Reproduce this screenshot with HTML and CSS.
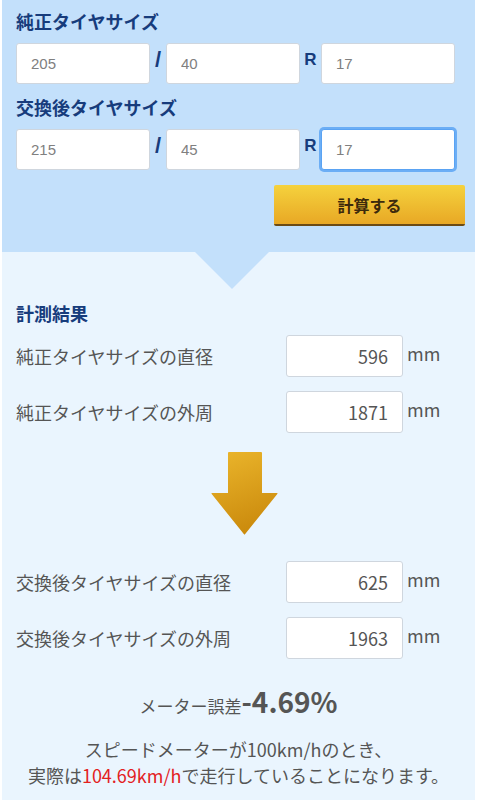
FILE: index.html
```html
<!DOCTYPE html>
<html lang="ja">
  <head>
    <meta charset="UTF-8" />
    <title>タイヤサイズ計算</title>
    <link rel="stylesheet" href="styles.css">
  </head>
  <body>
    <div class="calc">
      <div class="top">
        <h2>純正タイヤサイズ</h2>
        <div class="size-row">
          <input value="205" />
          <span class="sep">/</span>
          <input value="40" />
          <span class="sep r">R</span>
          <input value="17" />
        </div>

        <h2 class="second">交換後タイヤサイズ</h2>
        <div class="size-row">
          <input value="215" />
          <span class="sep">/</span>
          <input value="45" />
          <span class="sep r">R</span>
          <input class="focus" value="17" />
        </div>

        <div class="actions">
          <button>計算する</button>
        </div>
      </div>

      <div class="result">
        <h2>計測結果</h2>
        <div class="rows">
          <div class="row">
            <span class="label">純正タイヤサイズの直径</span>
            <div class="value">596</div>
            <span class="unit">mm</span>
          </div>
          <div class="row">
            <span class="label">純正タイヤサイズの外周</span>
            <div class="value">1871</div>
            <span class="unit">mm</span>
          </div>
        </div>

        <div class="arrow">
          <svg width="67" height="83" viewBox="0 0 67 83">
            <defs>
              <linearGradient id="arrowFill" x1="0" y1="0" x2="0.3" y2="1">
                <stop offset="0" stop-color="#ebb62c" />
                <stop offset="1" stop-color="#cc8c0e" />
              </linearGradient>
            </defs>
            <path d="M17 1 Q17 0 18 0 H50 Q51 0 51 1 V41 H66 Q67 41 66.3 42 L34.2 82 Q33.5 83 32.8 82 L0.7 42 Q0 41 1 41 H17 Z" fill="url(#arrowFill)" />
          </svg>
        </div>

        <div class="rows">
          <div class="row">
            <span class="label">交換後タイヤサイズの直径</span>
            <div class="value">625</div>
            <span class="unit">mm</span>
          </div>
          <div class="row">
            <span class="label">交換後タイヤサイズの外周</span>
            <div class="value">1963</div>
            <span class="unit">mm</span>
          </div>
        </div>

        <p class="error">メーター誤差<strong>-4.69%</strong></p>
        <p class="note">
          スピードメーターが100km/hのとき、<br />
          実際は<span class="red">104.69km/h</span>で走行していることになります。
        </p>
      </div>
    </div>
  </body>
</html>
```

FILE: styles.css
```css
body {
  margin: 0;
  background: #ffffff;
  font-family: "Noto Sans CJK JP", "Noto Sans", sans-serif;
}

.calc {
  margin: 0 2px;
  min-height: 800px;
  background: #eaf5fe;
}

h2 {
  margin: 0;
  font-size: 18px;
  line-height: 26px;
  font-weight: bold;
  color: #173c7c;
}

.top {
  position: relative;
  background: #c3e0fb;
  padding: 8px 10px 26px 14px;
}

.top::after {
  content: "";
  position: absolute;
  left: 193px;
  bottom: -37px;
  border-left: 37px solid transparent;
  border-right: 37px solid transparent;
  border-top: 37px solid #c3e0fb;
}

.top h2.second {
  margin-top: 10px;
}

.size-row {
  display: flex;
  align-items: center;
  margin: 9px 9px 0 0;
}

.size-row input {
  box-sizing: border-box;
  width: 134px;
  height: 41px;
  padding-left: 14px;
  border: 1px solid #cfd6de;
  border-radius: 3px;
  background: #ffffff;
  font-family: "Liberation Sans", sans-serif;
  font-size: 15px;
  color: #808080;
  outline-width: 0;
}

.size-row input.focus {
  border-color: #5aa3f3;
  box-shadow: 0 0 0 2px #6caef5;
}

.sep {
  width: 16px;
  text-align: center;
  font-family: "Liberation Sans", sans-serif;
  font-size: 22px;
  font-weight: bold;
  color: #173c7c;
  margin-top: -8px;
}

.sep.r {
  width: 21px;
  font-size: 17px;
}

.actions {
  display: flex;
  justify-content: flex-end;
  margin-top: 15px;
}

button {
  width: 191px;
  height: 41px;
  border: 0;
  border-bottom: 2px solid #6b4a14;
  border-radius: 2px;
  background: linear-gradient(#f5d23d, #e8a825);
  font-family: "Noto Sans CJK JP", sans-serif;
  font-size: 16px;
  font-weight: bold;
  color: #3d2a0c;
}

.result {
  padding: 48px 14px 0 14px;
}

.rows {
  display: flex;
  flex-direction: column;
  gap: 14px;
  margin-top: 9px;
}

.row {
  display: flex;
  align-items: center;
}

.label {
  width: 270px;
  font-size: 18px;
  color: #555555;
}

.value {
  box-sizing: border-box;
  width: 117px;
  height: 42px;
  line-height: 40px;
  padding-right: 14px;
  text-align: right;
  background: #ffffff;
  border: 1px solid #cfd6de;
  border-radius: 3px;
  font-size: 18px;
  color: #555555;
}

.unit {
  align-self: flex-start;
  margin: 5px 0 0 4px;
  font-size: 18px;
  color: #555555;
}

.arrow {
  display: flex;
  justify-content: center;
  margin: 19px 0 26px 0;
}

.arrow svg {
  display: block;
  margin-left: 12px;
}

.error {
  margin: 24px 0 0 0;
  text-align: center;
  font-size: 17px;
  line-height: 36px;
  color: #555555;
}

.error strong {
  font-size: 28px;
  font-weight: bold;
}

.note {
  margin: 12px 0 0 0;
  text-align: center;
  font-size: 18px;
  line-height: 26px;
  color: #555555;
}

.red {
  color: #e3211f;
}
```
